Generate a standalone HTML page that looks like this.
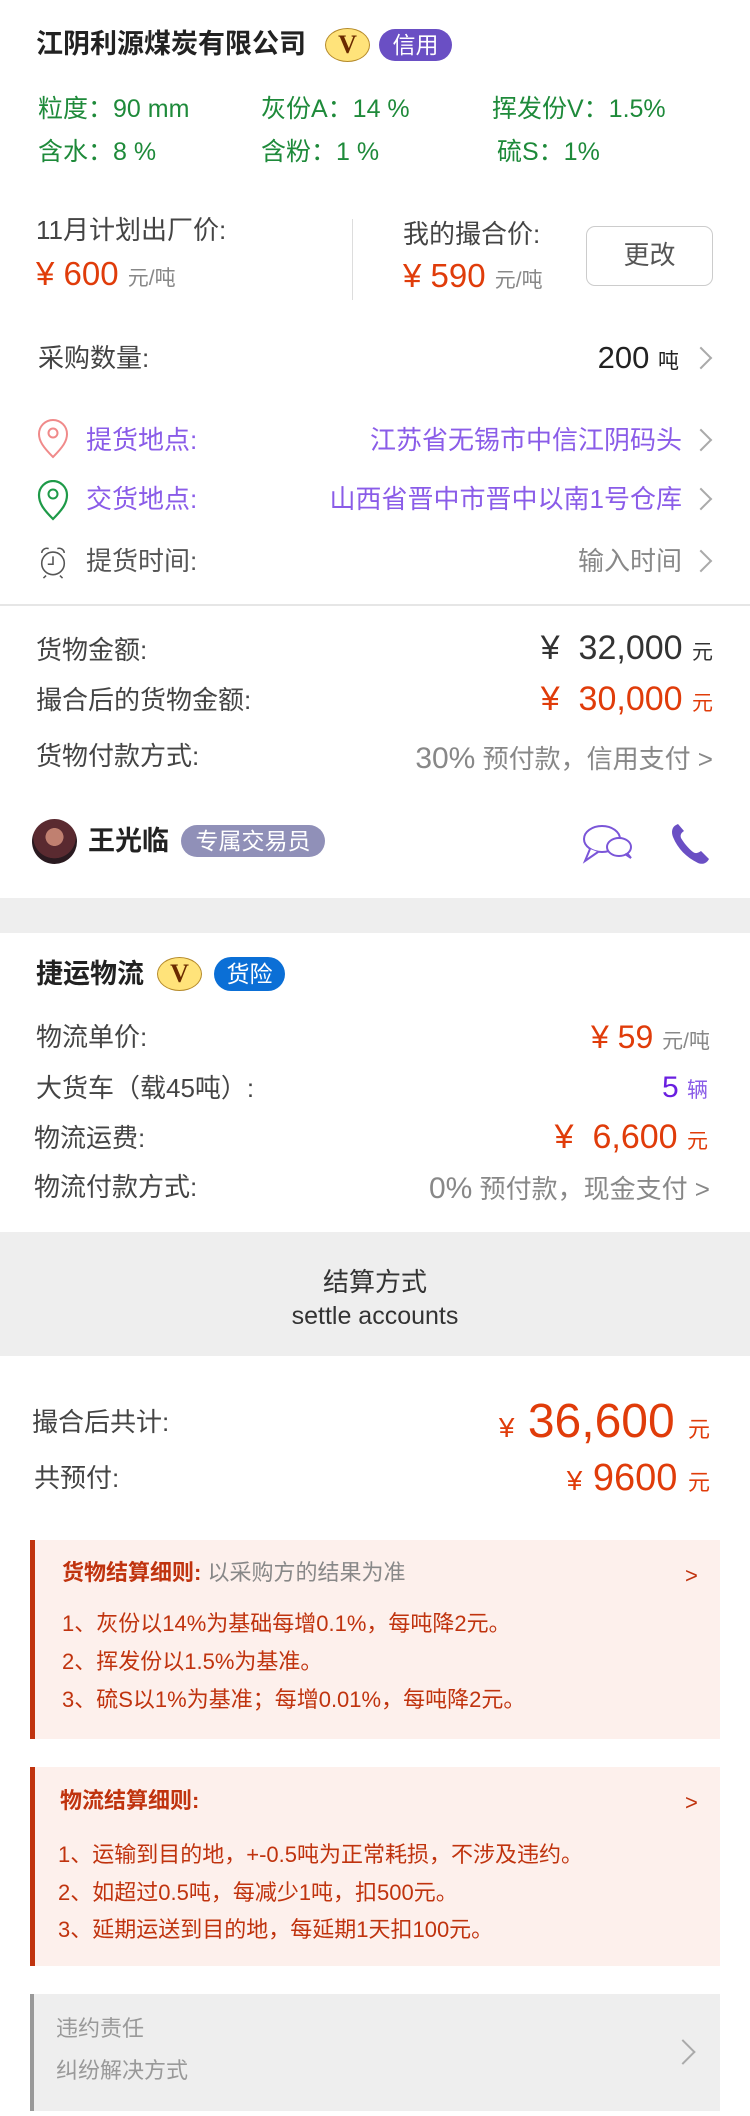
<!DOCTYPE html>
<html><head><meta charset="utf-8"><style>
*{margin:0;padding:0;box-sizing:border-box}
body{width:750px;height:2116px;position:relative;background:#fff;font-family:"Liberation Sans","Noto Sans CJK SC",sans-serif;color:#333;overflow:hidden}
.t{position:absolute;line-height:40px;height:40px;white-space:nowrap}
.r{text-align:right}
.g{color:#1e8a3a;font-size:25px}
.red{color:#e03c0a}
.pur{color:#8a5ce8}
.u{font-size:21px;color:#888}
.chev{position:absolute;width:16px;height:16px;border-right:2px solid #aaa;border-top:2px solid #aaa;transform:rotate(45deg)}
.vb{position:absolute;width:45px;height:34px;border-radius:50%;background:#ffe37a;border:1.5px solid #b58a2a;color:#6a2a00;font-family:"Liberation Serif",serif;font-size:26px;font-weight:bold;text-align:center;line-height:32px}
.pill{position:absolute;color:#fff;text-align:center;border-radius:20px}
.box{position:absolute;left:30px;width:690px;background:#fdf0ec;border-left:5px solid #c0330e}
.bl{position:absolute;font-size:22px;color:#c0330e;white-space:nowrap;line-height:30px}
</style></head><body>

<div class="t" style="left:36px;top:24px;font-size:27px;color:#222;font-weight:bold">江阴利源煤炭有限公司</div>
<div class="vb" style="left:325px;top:28px">V</div>
<div class="pill" style="left:379px;top:29px;width:73px;height:32px;line-height:32px;background:#6a4fc4;font-size:23px">信用</div>

<div class="t g" style="left:38px;top:89px">粒度：90 mm</div>
<div class="t g" style="left:261px;top:89px">灰份A：14 %</div>
<div class="t g" style="left:492px;top:89px">挥发份V：1.5%</div>
<div class="t g" style="left:38px;top:132px">含水：8 %</div>
<div class="t g" style="left:261px;top:132px">含粉：1 %</div>
<div class="t g" style="left:497px;top:132px">硫S：1%</div>

<div class="t" style="left:36px;top:210px;font-size:26px;color:#444">11月计划出厂价:</div>
<div class="t red" style="left:36px;top:254px;font-size:33px">¥ 600 <span class="u">元/吨</span></div>
<div style="position:absolute;left:352px;top:219px;width:1px;height:81px;background:#ddd"></div>
<div class="t" style="left:403px;top:214px;font-size:26px;color:#444">我的撮合价:</div>
<div class="t red" style="left:403px;top:256px;font-size:33px">¥ 590 <span class="u">元/吨</span></div>
<div style="position:absolute;left:586px;top:226px;width:127px;height:60px;border:1.5px solid #ccc;border-radius:9px;text-align:center;line-height:57px;font-size:26px;color:#555">更改</div>

<div class="t" style="left:38px;top:338px;font-size:26px;color:#444">采购数量:</div>
<div class="t r" style="right:71px;top:338px;font-size:31px;color:#222">200 <span style="font-size:21px">吨</span></div>
<div class="chev" style="left:693px;top:350px"></div>

<svg style="position:absolute;left:37px;top:419px" width="32" height="40" viewBox="0 0 32 40"><path d="M16 38 C6 28 2 22 2 15 A14 14 0 0 1 30 15 C30 22 26 28 16 38Z" fill="none" stroke="#f08a8a" stroke-width="2"/><circle cx="16" cy="14" r="4.5" fill="none" stroke="#f08a8a" stroke-width="2"/></svg>
<div class="t pur" style="left:86px;top:420px;font-size:26px">提货地点:</div>
<div class="t pur r" style="right:68px;top:420px;font-size:26px">江苏省无锡市中信江阴码头</div>
<div class="chev" style="left:693px;top:432px"></div>

<svg style="position:absolute;left:37px;top:480px" width="32" height="41" viewBox="0 0 32 41"><path d="M16 39 C6 29 2 23 2 15 A14 14 0 0 1 30 15 C30 23 26 29 16 39Z" fill="none" stroke="#1e9a48" stroke-width="2.2"/><circle cx="16" cy="14" r="4.5" fill="none" stroke="#1e9a48" stroke-width="2"/></svg>
<div class="t pur" style="left:86px;top:479px;font-size:26px">交货地点:</div>
<div class="t pur r" style="right:68px;top:479px;font-size:26px">山西省晋中市晋中以南1号仓库</div>
<div class="chev" style="left:693px;top:491px"></div>

<svg style="position:absolute;left:37px;top:546px" width="32" height="33" viewBox="0 0 32 38"><circle cx="16" cy="20" r="13" fill="none" stroke="#555" stroke-width="1.8"/><path d="M3 8 A6 6 0 0 1 11 3 M29 8 A6 6 0 0 0 21 3 M16 12 V21 H10 M8 34 L5 37 M24 34 L27 37" fill="none" stroke="#555" stroke-width="1.8"/></svg>
<div class="t" style="left:86px;top:541px;font-size:26px;color:#555">提货时间:</div>
<div class="t r" style="right:68px;top:541px;font-size:26px;color:#888">输入时间</div>
<div class="chev" style="left:693px;top:553px"></div>

<div style="position:absolute;left:0;top:604px;width:750px;height:1.5px;background:#e6e6e6"></div>

<div class="t" style="left:36px;top:630px;font-size:26px;color:#444">货物金额:</div>
<div class="t r" style="right:37px;top:628px;font-size:34px;color:#333">¥&nbsp; 32,000 <span style="font-size:21px">元</span></div>
<div class="t" style="left:36px;top:680px;font-size:26px;color:#444">撮合后的货物金额:</div>
<div class="t r red" style="right:37px;top:679px;font-size:34px">¥&nbsp; 30,000 <span style="font-size:21px">元</span></div>
<div class="t" style="left:36px;top:736px;font-size:26px;color:#444">货物付款方式:</div>
<div class="t r" style="right:37px;top:739px;font-size:26px;color:#888"><span style="font-size:30px">30%</span> 预付款，信用支付 &gt;</div>

<div style="position:absolute;left:32px;top:819px;width:45px;height:45px;border-radius:50%;background:radial-gradient(circle at 50% 40%,#c08070 0 25%,#5a2a30 26% 60%,#2a1a20 61%)"></div>
<div class="t" style="left:88px;top:821px;font-size:27px;font-weight:bold;color:#222">王光临</div>
<div class="pill" style="left:181px;top:825px;width:144px;height:32px;line-height:32px;background:#9090b8;font-size:23px">专属交易员</div>
<svg style="position:absolute;left:582px;top:823px" width="52" height="42" viewBox="0 0 52 42"><ellipse cx="20" cy="16" rx="18" ry="13" fill="none" stroke="#7a55d8" stroke-width="2"/><path d="M8 26 L3 38 L16 29" fill="#fff" stroke="#7a55d8" stroke-width="2"/><ellipse cx="37" cy="24" rx="12" ry="9" fill="#fff" stroke="#7a55d8" stroke-width="2"/><path d="M43 31 L49 35 L45 30" fill="none" stroke="#7a55d8" stroke-width="2"/></svg>
<svg style="position:absolute;left:670px;top:823px" width="40" height="42" viewBox="0 0 40 42"><path d="M6 2 C2 4 1 9 3 14 C8 26 16 34 28 40 C33 42 37 40 39 36 L31 28 C28 30 26 31 23 29 C18 25 14 20 11 15 C10 12 11 10 14 8 L8 1Z" fill="#6a4fc4"/></svg>

<div style="position:absolute;left:0;top:898px;width:750px;height:35px;background:#eee"></div>

<div class="t" style="left:36px;top:954px;font-size:27px;font-weight:bold;color:#222">捷运物流</div>
<div class="vb" style="left:157px;top:957px">V</div>
<div class="pill" style="left:214px;top:957px;width:71px;height:34px;line-height:34px;background:#0b6fd6;font-size:23px">货险</div>

<div class="t" style="left:36px;top:1017px;font-size:26px;color:#444">物流单价:</div>
<div class="t r red" style="right:40px;top:1017px;font-size:32px">¥ 59 <span class="u">元/吨</span></div>
<div class="t" style="left:36px;top:1068px;font-size:26px;color:#444">大货车（载45吨）:</div>
<div class="t r" style="right:42px;top:1068px;font-size:30px;color:#6a1fe0">5 <span style="font-size:21px;color:#8a5ce8">辆</span></div>
<div class="t" style="left:34px;top:1118px;font-size:26px;color:#444">物流运费:</div>
<div class="t r red" style="right:42px;top:1117px;font-size:34px">¥&nbsp; 6,600 <span style="font-size:21px">元</span></div>
<div class="t" style="left:34px;top:1167px;font-size:26px;color:#444">物流付款方式:</div>
<div class="t r" style="right:40px;top:1169px;font-size:26px;color:#888"><span style="font-size:30px">0%</span> 预付款，现金支付 &gt;</div>

<div style="position:absolute;left:0;top:1232px;width:750px;height:124px;background:#eee"></div>
<div class="t" style="left:0;width:750px;text-align:center;top:1262px;font-size:26px;color:#333">结算方式</div>
<div class="t" style="left:0;width:750px;text-align:center;top:1296px;font-size:25px;color:#333">settle accounts</div>

<div class="t" style="left:32px;top:1402px;font-size:26px;color:#444">撮合后共计:</div>
<div class="t r red" style="right:40px;top:1396px;font-size:48px;height:52px;line-height:52px"><span style="font-size:28px">¥</span> 36,600 <span style="font-size:22px">元</span></div>
<div class="t" style="left:34px;top:1458px;font-size:26px;color:#444">共预付:</div>
<div class="t r red" style="right:40px;top:1456px;font-size:38px;line-height:44px;height:44px"><span style="font-size:28px">¥</span> 9600 <span style="font-size:22px">元</span></div>

<div class="box" style="top:1540px;height:199px"></div>
<div class="bl" style="left:62px;top:1558px;font-weight:bold">货物结算细则: <span style="font-weight:normal;color:#888">以采购方的结果为准</span></div>
<div class="bl" style="left:685px;top:1561px">&gt;</div>
<div class="bl" style="left:62px;top:1609px">1、灰份以14%为基础每增0.1%，每吨降2元。</div>
<div class="bl" style="left:62px;top:1647px">2、挥发份以1.5%为基准。</div>
<div class="bl" style="left:62px;top:1685px">3、硫S以1%为基准；每增0.01%，每吨降2元。</div>

<div class="box" style="top:1767px;height:199px"></div>
<div class="bl" style="left:60px;top:1786px;font-weight:bold">物流结算细则:</div>
<div class="bl" style="left:685px;top:1788px">&gt;</div>
<div class="bl" style="left:58px;top:1840px">1、运输到目的地，+-0.5吨为正常耗损，不涉及违约。</div>
<div class="bl" style="left:58px;top:1878px">2、如超过0.5吨，每减少1吨，扣500元。</div>
<div class="bl" style="left:58px;top:1915px">3、延期运送到目的地，每延期1天扣100元。</div>

<div style="position:absolute;left:30px;top:1994px;width:690px;height:117px;background:#eee;border-left:4px solid #999"></div>
<div class="bl" style="left:56px;top:2014px;color:#999">违约责任</div>
<div class="bl" style="left:56px;top:2056px;color:#999">纠纷解决方式</div>
<div class="chev" style="left:674px;top:2043px;width:18px;height:18px;border-color:#aaa"></div>
</body></html>
